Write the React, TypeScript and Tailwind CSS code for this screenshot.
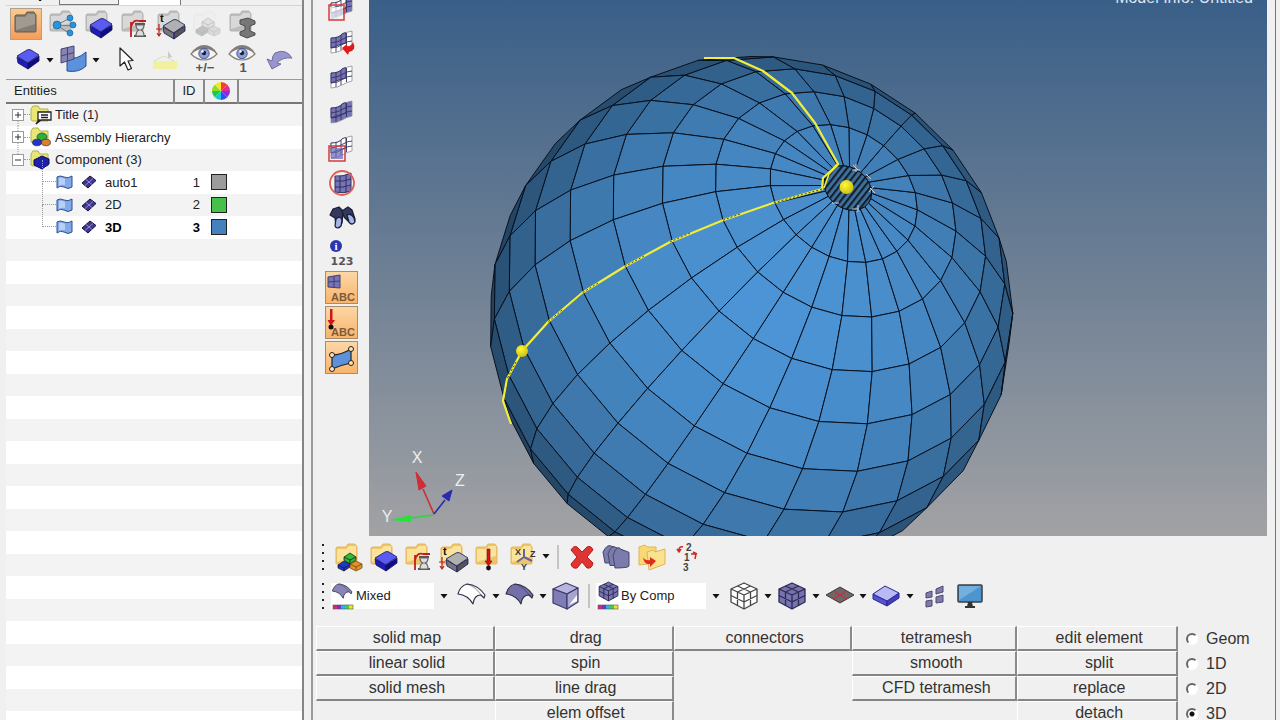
import React from "react";

type Kids = { children?: React.ReactNode };
type Pt = [number, number, number];

/* ---------- shared icon parts ---------- */

const Svg = ({ children, w = 32, h = 32 }: Kids & { w?: number; h?: number }) => (
  <svg width={w} height={h} viewBox={`0 0 ${w} ${h}`} fill="none" aria-hidden="true" className="block shrink-0">
    {children}
  </svg>
);

const FolderShape = ({ tone }: { tone: "gray" | "gold" | "faint" | "dark" }) => {
  const c = {
    gray: ["#dedede", "#bdbdbd", "#b4b4b4"],
    gold: ["#fdeba6", "#f0c468", "#e3b760"],
    faint: ["#efefef", "#e4e4e4", "#dcdcdc"],
    dark: ["#a8a199", "#837d76", "#5f5a55"],
  }[tone];
  return (
    <g strokeLinejoin="round">
      <path d="M4 7 L4 22 Q4 23 5 23 L24 23 Q25 23 25 22 L25 6 Q25 5 24 5 L23 3 L16 3 L14 6 L5 6 Z" fill={c[1]} stroke={c[2]} />
      <path d="M5 8 L14 8 L17 5 L24 5 L24 15 L5 21 Z" fill={c[0]} opacity="0.8" />
    </g>
  );
};

const Slab = ({ x = 8, y = 11, top = "#5a5af5", left = "#1d1dbb", right = "#0c0c86" }) => (
  <g transform={`translate(${x} ${y})`} stroke="#15155c" strokeWidth="0.8" strokeLinejoin="round">
    <path d="M0 7 L11 13 L11 19 L1 13 Z" fill={left} />
    <path d="M22 6 L11 13 L11 19 L22 11 Z" fill={right} />
    <path d="M0 6 L10 0 Q12 -1 14 0 L22 5 L12 12 Q11 13 9 12 Z" fill={top} />
  </g>
);

const Triad = ({ gold = false }) => (
  <g strokeWidth="0.7">
    <g stroke="#111" fill={gold ? "#2ebb3a" : "#bbb"}>
      <path d="M12 16 l6 -4 6 4 v3 l-6 4 -6 -4z" />
      <path d="M12 16 l6 3 6 -3 M18 19 v4" />
    </g>
    <g stroke="#111" fill="#2038cc">
      <path d="M6 24 l6 -4 6 3 v3 l-6 4 -6 -3z" />
      <path d="M6 24 l6 3 6 -3 M12 27 v3" />
    </g>
    <g stroke="#6b3a00" fill="#e2922a">
      <path d="M18 23 l6 -3 6 3 v4 l-6 3 -6 -3z" />
      <path d="M18 23 l6 3 6 -3 M24 26 v3" />
    </g>
  </g>
);

const Hourglass = () => (
  <g>
    <path d="M13 29 V14 M13 19 Q15 11 21 13 H28" stroke="#c11e1e" strokeWidth="1.8" />
    <path d="M17 16 H27 M16 28 H28" stroke="#555" strokeWidth="1.8" />
    <path d="M18 17 Q18 21 21 22 Q18 23 18 28 H26 Q26 23 23 22 Q26 21 26 17 Z" stroke="#666" strokeWidth="1.2" fill="#ddd" />
  </g>
);

const SizeT = () => (
  <g>
    <text x="6" y="14" fontSize="11" fontWeight="700" fill="#111" fontFamily="Liberation Sans, sans-serif">t</text>
    <path d="M5 16 V28 M2 21 H8 M3 25 L5 28 L7 25" stroke="#bb2020" strokeWidth="1.2" />
    <Slab x={9} y={12} top="#b0b0b0" left="#777" right="#555" />
  </g>
);

const RedPin = () => (
  <g>
    <path d="M15 8 H18 V20 H20 L16.5 25 L13 20 H15 Z" fill="#d01818" stroke="#7d0c0c" strokeWidth="0.6" />
    <circle cx="16.5" cy="27" r="2.4" fill="#111" />
  </g>
);

const Caret = () => (
  <svg width="8" height="5" viewBox="0 0 8 5" aria-hidden="true" className="block shrink-0">
    <path d="M0.500 0 H7.500 L4 4.500 Z" fill="#111" />
  </svg>
);

const CurveSheet = ({ fill }: { fill: string }) => (
  <g stroke="#2d2d42" strokeWidth="1.1" strokeLinejoin="round">
    <path d="M2 14 Q4 6 11 4 Q22 5 29 15 L28 18 L25 15 Q18 15 17 24 Q12 15 2 14 Z" fill={fill} />
    <path d="M11 4 Q20 7 25 15" opacity="0.4" />
  </g>
);

const CubeMesh = ({ fill, dark }: { fill: string; dark: string }) => (
  <g stroke={dark} strokeWidth="1.3" strokeLinejoin="round">
    <path d="M16 3 L29 9 V22 L16 29 L3 22 V9 Z" fill={fill} />
    <path d="M3 9 L16 15 L29 9 M16 15 V29 M9.5 6 L22.5 12 V26 M22.5 6 L9.5 12 V26 M3 15.500 L16 22 L29 15.500" />
  </g>
);

const Patch = ({ a, b, tail }: { a: string; b: string; tail?: React.ReactNode }) => (
  <Svg>
    <path d="M6 11 Q14 11 17 7 Q22 5 27 4 V19 Q22 20 17 23 Q12 26 6 26 Z" fill={b} stroke="#8e8e99" strokeWidth="0.8" />
    <path d="M6 11 Q14 11 17 7 Q20 5 21 6 V16 Q13 18 6 21 Z" fill={a} stroke="#30305a" strokeWidth="0.9" />
    <path d="M6 16 Q14 15 18 12 Q23 9 27 9 M6 21 Q13 21 18 17 Q23 14 27 14 M11 10 V25 M16 8 V23 M21.500 6 V20" stroke="#33335c" strokeWidth="0.9" />
    {tail}
  </Svg>
);

const Eye = ({ label }: { label: string }) => (
  <Svg>
    <path d="M3 10 Q9 4 16 4 Q24 4 29 10 Q23 16 16 16 Q9 16 3 10 Z" fill="#f6f6f6" stroke="#8b7d76" strokeWidth="1.2" />
    <path d="M3 9 Q9 1 16 1 Q24 1 29 9 Q23 5 16 4.500 Q9 5 3 9" fill="#857c78" />
    <circle cx="16" cy="9.500" r="5.200" fill="#8ba0d4" stroke="#4b5c91" />
    <circle cx="16" cy="9" r="2.200" fill="#1b1f3b" />
    <circle cx="14.500" cy="7.500" r="1.200" fill="#fff" />
    <text x="17" y="28" textAnchor="middle" fontSize="13" fontWeight="700" fill="#555" fontFamily="Liberation Sans, sans-serif">{label}</text>
  </Svg>
);

const ToolButton = ({ label, children, className = "" }: Kids & { label: string; className?: string }) => (
  <button type="button" aria-label={label} className={`flex shrink-0 items-center justify-center ${className}`}>
    {children}
  </button>
);

/* ---------- meshed sphere ---------- */

const CX = 751;
const CY = 317;
const R = 262;
const TILT = (38.2 * Math.PI) / 180;
const CAP = 5.6;
const STEP = 12.06;
const SECTORS = 25;
const WEDGE = 360 / SECTORS;
const START = 4.8;

const point = (polar: number, azimuth: number): Pt => {
  const a = (polar * Math.PI) / 180;
  const p = (azimuth * Math.PI) / 180;
  const u = -Math.cos(a) * Math.sin(TILT) + Math.sin(a) * Math.cos(p) * Math.cos(TILT);
  const v = Math.sin(a) * Math.sin(p);
  const z = Math.cos(a) * Math.cos(TILT) + Math.sin(a) * Math.cos(p) * Math.sin(TILT);
  return [-0.6 * u + 0.8 * v, 0.8 * u + 0.6 * v, z];
};

const shade = (x: number, y: number, z: number) => {
  const light = Math.max(0, 0.08 * x - 0.02 * y + 0.995 * z);
  const k = 0.45 + 0.57 * Math.pow(light, 0.85);
  return `rgb(${Math.round(75 * k)},${Math.round(146 * k)},${Math.round(210 * k)})`;
};

const facets: { d: string; fill: string }[] = [];
for (let ring = 0; ring < 14; ring++) {
  for (let m = 0; m < SECTORS; m++) {
    const a0 = CAP + ring * STEP;
    const p0 = START + m * WEDGE;
    const q = [point(a0, p0), point(a0 + STEP, p0), point(a0 + STEP, p0 + WEDGE), point(a0, p0 + WEDGE)];
    const area = q.reduce((s, c, i) => {
      const n = q[(i + 1) % 4];
      return s + c[0] * n[1] - n[0] * c[1];
    }, 0);
    if (area < 0) {
      const mid = [0, 1, 2].map((k) => q.reduce((s, c) => s + c[k], 0) / 4);
      facets.push({
        d: q.map((c) => `${(CX + c[0] * R).toFixed(1)},${(CY + c[1] * R).toFixed(1)}`).join(" "),
        fill: shade(mid[0], mid[1], mid[2]),
      });
    }
  }
}
const capPoints = Array.from({ length: SECTORS }, (_, m) => point(CAP, START + m * WEDGE))
  .map((c) => `${(CX + c[0] * R).toFixed(1)},${(CY + c[1] * R).toFixed(1)}`)
  .join(" ");

const guide =
  "M704 58 L734 58 L763 71 L792 93 L815 123 L838 164 L823 178 L822 189 L773 203 L721 221 L670 242 L624 267 L582 293 L548 322 L522 351 L507 379 L503 401 L511 424";

const Model = () => (
  <svg viewBox="369 0 898 536" preserveAspectRatio="xMidYMid slice" className="block h-full w-full" role="img" aria-label="Meshed sphere">
    <defs>
      <pattern id="hatch" width="5" height="5" patternUnits="userSpaceOnUse" patternTransform="rotate(38)">
        <rect width="5" height="5" fill="#41719d" />
        <rect width="2.200" height="5" fill="#12202f" />
      </pattern>
      <radialGradient id="bead" cx="0.4" cy="0.35" r="0.7">
        <stop offset="0" stopColor="#fdf93a" />
        <stop offset="1" stopColor="#c9bd10" />
      </radialGradient>
    </defs>
    <g stroke="#07101e" strokeWidth="1" strokeLinejoin="round">
      {facets.map((f) => (
        <polygon key={f.d} points={f.d} fill={f.fill} />
      ))}
      <polygon points={capPoints} fill="url(#hatch)" />
    </g>
    <path d="M853 165 l5 5 M856 164 v8 M852 170 h8 M866 174 l5 5 M870 188 l5 5 M874 186 l-5 6 M832 203 h7 M852 209 h7 M858 205 v7" stroke="#c9ced4" strokeWidth="1" fill="none" />
    <path d={guide} stroke="#f2ee3a" strokeWidth="2.200" fill="none" strokeLinejoin="round" />
    <path d="M822 189 L773 203 M740 214 L721 221 M690 233 L670 242 M644 256 L624 267 M598 283 L582 293 M562 310 L548 322 M516 362 L507 379" stroke="#4a4a10" strokeWidth="1" strokeDasharray="2 2" fill="none" />
    <path d="M838 165 L829 174 L824 188" stroke="#f2ee3a" strokeWidth="1.500" fill="none" />
    <circle cx="846.500" cy="187" r="7" fill="url(#bead)" />
    <circle cx="522" cy="351" r="6" fill="url(#bead)" />
  </svg>
);

const AxisTriad = () => (
  <svg width="120" height="90" viewBox="370 446 120 90" fill="none" aria-hidden="true" className="absolute bottom-0 left-0">
    <path d="M435 514 L424 489" stroke="#d02d35" strokeWidth="1.600" />
    <path d="M417 472 L427 486 L420 490 Z" fill="#d02d35" stroke="#d02d35" />
    <path d="M435 514 L446 500" stroke="#2b2bb0" strokeWidth="1.600" />
    <path d="M453 490 L450 501 L443 496 Z" fill="#2b2bb0" stroke="#2b2bb0" />
    <path d="M435 515 L411 518" stroke="#27d83a" strokeWidth="1.600" />
    <path d="M391 520 L412 515 L412 522 Z" fill="#27e03a" />
    <g fill="#eceef0" fontSize="16" textAnchor="middle" fontFamily="Liberation Sans, sans-serif">
      <text x="418" y="463">X</text>
      <text x="461" y="486">Z</text>
      <text x="388" y="522">Y</text>
    </g>
  </svg>
);

/* ---------- model browser ---------- */

const Expander = ({ open = false, first = false }) => (
  <svg width="12" height="22" viewBox="0 0 12 22" fill="none" aria-hidden="true" className="block shrink-0">
    {!first && <path d="M6 0 V5" stroke="#999" strokeDasharray="1 1" />}
    {!open && <path d="M6 17 V22" stroke="#999" strokeDasharray="1 1" />}
    <rect x="0.500" y="5.500" width="11" height="11" fill="#fff" stroke="#9a9a9a" />
    <path d={open ? "M3 11 H9" : "M3 11 H9 M6 8 V14"} stroke="#333" />
  </svg>
);

const TreeFolder = ({ children }: Kids) => (
  <svg width="22" height="20" viewBox="0 0 22 20" fill="none" aria-hidden="true" className="block shrink-0">
    <path d="M1 4 L3 1 H8 L10 4 H18 V16 H3 L1 15 Z" fill="#e9e678" stroke="#b5b04c" />
    {children}
  </svg>
);

const SurfaceIcon = () => (
  <svg width="17" height="16" viewBox="0 0 17 16" fill="none" aria-hidden="true" className="block shrink-0">
    <path d="M1 3 Q4 1 8 3 Q12 5 16 2 V13 Q12 16 8 13 Q4 11 1 14 Z" fill="#83aae8" stroke="#2f4f8f" />
    <path d="M3 4 Q6 3 9 5 V11 Q6 10 3 12 Z" fill="#b8d0f7" />
  </svg>
);

const ElementIcon = () => (
  <svg width="16" height="14" viewBox="0 0 16 14" fill="none" aria-hidden="true" className="block shrink-0">
    <path d="M9 1 L15 5.500 L7 13 L1 8 Z" fill="#3d3690" stroke="#15123f" />
    <path d="M5 4.500 L11 9.500 M12 3.500 L4 10.500" stroke="#aaa5dd" strokeWidth="0.8" />
  </svg>
);

const groups = [
  {
    name: "Title (1)",
    open: false,
    art: <path d="M8 7 H21 V15 H11 L6 19 L9 15 H8 Z M11 10 H18 M11 12.500 H18" fill="#fff" stroke="#222" strokeWidth="1.300" />,
  },
  {
    name: "Assembly Hierarchy",
    open: false,
    art: (
      <g strokeWidth="0.600" stroke="#123">
        <ellipse cx="12" cy="10" rx="5" ry="4" fill="#2fae3a" />
        <ellipse cx="7" cy="15.500" rx="4.500" ry="3.300" fill="#2635c8" />
        <ellipse cx="16" cy="15.500" rx="4.500" ry="3.300" fill="#d9822b" />
      </g>
    ),
  },
  {
    name: "Component (3)",
    open: true,
    art: <path d="M4 10 L12 6 L19 9 L19 14 L12 19 L4 15 Z" fill="#1f1fae" stroke="#0b0b55" strokeLinejoin="round" />,
  },
];

const components = [
  { name: "auto1", id: 1, swatch: "bg-[#9c9c9c]", bold: false },
  { name: "2D", id: 2, swatch: "bg-[#45c04b]", bold: false },
  { name: "3D", id: 3, swatch: "bg-[#4780bf]", bold: true },
];

const rowClass = "h-[22px] odd:bg-[#f3f3f3] even:h-[23px] even:bg-white";

const Browser = () => (
  <table className="w-full table-fixed border-collapse text-[13px] leading-none text-[#222]">
    <colgroup>
      <col className="w-[168px]" />
      <col className="w-[30px]" />
      <col className="w-[34px]" />
      <col />
    </colgroup>
    <thead>
      <tr className="h-[23px] border-t border-b-2 border-t-[#999] border-b-[#777] bg-[#f0f0f0]">
        <th className="border-r-2 border-[#8a8a8a] pl-2 text-left font-normal">Entities</th>
        <th className="border-r-2 border-[#8a8a8a] text-center font-normal">ID</th>
        <th className="border-r-2 border-[#8a8a8a] p-0" aria-label="Color">
          <svg width="18" height="18" viewBox="-9 -9 18 18" className="mx-auto block" aria-hidden="true">
            {["#f8e71c", "#8be01f", "#22c54a", "#1cc6d8", "#2b4ff0", "#8b2be0", "#e02b9a", "#f0402b"].map((c, i) => {
              const a = ((5 - i) * Math.PI) / 4;
              const b = a + Math.PI / 4;
              return <path key={c} fill={c} d={`M0 0 L${9 * Math.cos(a)} ${9 * Math.sin(a)} A9 9 0 0 1 ${9 * Math.cos(b)} ${9 * Math.sin(b)} Z`} />;
            })}
          </svg>
        </th>
        <th aria-label="Empty" />
      </tr>
    </thead>
    <tbody>
      {groups.map((g, i) => (
        <tr key={g.name} className={rowClass}>
          <td className="p-0">
            <div className="flex items-center pl-1.5">
              <Expander open={g.open} first={i === 0} />
              <span className="w-1.5 shrink-0 border-t border-dotted border-[#999]" />
              <TreeFolder>{g.art}</TreeFolder>
              <span className="pl-[3px] whitespace-nowrap">{g.name}</span>
            </div>
          </td>
          <td />
          <td />
          <td />
        </tr>
      ))}
      {components.map((c) => (
        <tr key={c.name} className={`${rowClass} ${c.bold ? "font-bold text-black" : ""}`}>
          <td className="p-0">
            <div className="flex items-center pl-9">
              <span className="-mt-[22px] h-[22px] w-3.5 border-b border-l border-dotted border-[#999]" />
              <SurfaceIcon />
              <span className="w-2" />
              <ElementIcon />
              <span className="pl-2">{c.name}</span>
            </div>
          </td>
          <td className="p-0 pr-1 text-right">{c.id}</td>
          <td className="p-0">
            <span className={`ml-[7px] block size-4 border border-[#222] ${c.swatch}`} />
          </td>
          <td />
        </tr>
      ))}
      {Array.from({ length: 24 }, (_, i) => (
        <tr key={i} className={rowClass}>
          <td colSpan={4} />
        </tr>
      ))}
    </tbody>
  </table>
);

const LeftPanel = () => (
  <aside className="flex w-[304px] shrink-0 flex-col overflow-hidden border-r-2 border-[#858585] pl-1.5">
    <div className="flex h-[5px] shrink-0 items-end text-sm leading-4">
      <button type="button" className="w-[54px] border-r border-[#777] pr-2 pb-1">Utility</button>
      <button type="button" className="w-[59px] border-r border-b border-[#777] pb-[3px]">Mask</button>
      <button type="button" className="w-[62px] border-r border-[#777] bg-white pb-1">Model</button>
    </div>
    <div className="flex h-9 shrink-0 items-center gap-1 border-t border-[#d5d5d5] pl-1">
      <ToolButton label="Folders" className="size-8 border border-[#b0a08c] bg-linear-to-b from-[#fbc98e] to-[#f79d58]">
        <Svg w={30} h={30}><FolderShape tone="dark" /></Svg>
      </ToolButton>
      <ToolButton label="Assemblies">
        <Svg>
          <FolderShape tone="gray" />
          <path d="M11 17 L24 10 M11 17 L27 18 M11 17 L24 26" stroke="#777" />
          <g fill="#2b93d8" stroke="#14588f" strokeWidth="0.600">
            <circle cx="11" cy="17" r="4" /><circle cx="24" cy="10" r="3" /><circle cx="27" cy="17" r="3" /><circle cx="24" cy="25" r="3" />
          </g>
        </Svg>
      </ToolButton>
      <ToolButton label="Components"><Svg><FolderShape tone="gray" /><Slab /></Svg></ToolButton>
      <ToolButton label="Load collectors"><Svg><FolderShape tone="gray" /><Hourglass /></Svg></ToolButton>
      <ToolButton label="Properties"><Svg><FolderShape tone="gray" /><SizeT /></Svg></ToolButton>
      <ToolButton label="Materials"><Svg><g opacity="0.25"><FolderShape tone="faint" /><g transform="translate(0 -2)" filter="grayscale(1)"><Triad /></g></g></Svg></ToolButton>
      <ToolButton label="Sections">
        <Svg>
          <FolderShape tone="gray" />
          <path d="M14 12 L22 10 L29 13 V16 L24 18 V23 L29 25 V27 L21 30 L14 27 V24 L19 22 V18 L14 16 Z" fill="#777" stroke="#4c4c4c" strokeLinejoin="round" />
        </Svg>
      </ToolButton>
    </div>
    <div className="flex h-[38px] shrink-0 items-center pl-1.5">
      <ToolButton label="Component view"><Svg><Slab x={5} y={6} /></Svg></ToolButton>
      <ToolButton label="Component view options" className="w-3"><Caret /></ToolButton>
      <ToolButton label="Element and geometry">
        <Svg>
          <path d="M11 13 Q20 17 30 8 V22 Q23 29 11 27 Z" fill="#5c92dd" stroke="#274d8b" />
          <path d="M5 5 L18 2 V15 L5 19 Z" fill="#8684b5" stroke="#46446f" />
          <path d="M5 12 L18 8.500 M11.500 4 V17" stroke="#46446f" />
        </Svg>
      </ToolButton>
      <ToolButton label="Element options" className="w-4"><Caret /></ToolButton>
      <ToolButton label="Select" className="ml-2">
        <Svg><path d="M8 4 L8 22 L12.500 18 L16 26 L19.500 24.500 L16 17 L21 16.500 Z" fill="#fff" stroke="#222" strokeWidth="1.200" strokeLinejoin="round" /></Svg>
      </ToolButton>
      <ToolButton label="Highlight" className="ml-1.5">
        <Svg><path d="M3 17 H27 V25 H3 Z" fill="#f4f0a2" /><path d="M4 17 L14 12 L24 17" stroke="#d5e0b5" /><path d="M18 7 L22 13 L18 14 Z" fill="#c8c8c8" /></Svg>
      </ToolButton>
      <ToolButton label="Show or hide" className="ml-1.5"><Eye label="+/−" /></ToolButton>
      <ToolButton label="Isolate" className="ml-1.5"><Eye label="1" /></ToolButton>
      <ToolButton label="Undo" className="ml-1.5">
        <Svg><path d="M3 15 L8 25 L17 20 L13 19 Q18 13 28 14 Q22 4 11 9 Q8 12 8 17 Z" fill="#9896cc" stroke="#6e6ca4" /></Svg>
      </ToolButton>
    </div>
    <div className="min-h-0 flex-1 overflow-hidden bg-white">
      <Browser />
    </div>
  </aside>
);

/* ---------- vertical display bar ---------- */

const FILL = "#7773b8";
const sideTools = [
  { label: "Mask elements", on: false, art: <Patch a="#fff" b={FILL} tail={<g><rect x="5" y="15" width="13" height="11" fill="#fff" opacity="0.700" /><rect x="4" y="13" width="15" height="15" stroke="#d33c3c" strokeWidth="1.500" /></g>} /> },
  { label: "Reverse mask", on: false, art: <Patch a={FILL} b="#fff" tail={<path d="M17 21 L22 17 L22 19 Q26 20 28 15 Q32 23 24 25 L23 28 Z" fill="#e01b1b" />} /> },
  { label: "Unmask adjacent", on: false, art: <Patch a={FILL} b="#fff" /> },
  { label: "Unmask all", on: false, art: <Patch a={FILL} b={FILL} /> },
  { label: "Unmask shown", on: false, art: <Patch a="#fff" b="#fff" tail={<g><rect x="6" y="16" width="12" height="11" fill="#6866b4" opacity="0.7" /><rect x="4" y="14" width="16" height="15" stroke="#d33c3c" strokeWidth="1.500" /></g>} /> },
  {
    label: "Spherical clipping",
    on: false,
    art: (
      <Svg>
        <path d="M10 9 Q18 10 26 6 V24 Q18 27 10 25 Z" fill={FILL} stroke="#30305a" />
        <path d="M10 14 Q18 15 26 12 M10 20 Q18 21 26 18 M15 9 V26 M21 8 V26" stroke="#30305a" />
        <circle cx="17" cy="16" r="12" stroke="#df5b5b" strokeWidth="1.800" />
      </Svg>
    ),
  },
  {
    label: "Find",
    on: false,
    art: (
      <Svg>
        <g stroke="#171b33" strokeWidth="1.200" strokeLinejoin="round">
          <path d="M5 13 L8 7 L14 5 L18 9 L17 21 Q15 26 11 25 L10 16 Z" fill="#33395e" />
          <path d="M17 9 L23 5 L27 8 L30 17 Q30 22 26 22 L19 15 Z" fill="#33395e" />
          <path d="M11 17 Q15 13 17 18 L16 24 Q12 28 10 24 Z" fill="#a6b4e6" />
          <path d="M22 13 Q26 11 29 16 L30 20 Q27 24 24 20 Z" fill="#a6b4e6" />
        </g>
      </Svg>
    ),
  },
  {
    label: "Numbers",
    on: false,
    art: (
      <Svg>
        <circle cx="11" cy="9" r="6" fill="#2936b0" />
        <text x="11" y="13" textAnchor="middle" fontSize="11" fontWeight="700" fill="#fff" fontFamily="Liberation Serif, serif">i</text>
        <text x="17" y="28" textAnchor="middle" fontSize="11" fontWeight="700" fill="#555" fontFamily="DejaVu Sans, sans-serif">123</text>
      </Svg>
    ),
  },
  {
    label: "Element labels",
    on: true,
    art: (
      <Svg>
        <path d="M3 5 L15 3 V16 L3 15 Z" fill="#7773b8" stroke="#40406f" />
        <path d="M3 10 L15 9 M9 4 V15" stroke="#40406f" />
        <text x="18" y="29" textAnchor="middle" fontSize="11" fontWeight="700" fill="#7c5a3c" fontFamily="Liberation Sans, sans-serif">ABC</text>
      </Svg>
    ),
  },
  {
    label: "Load labels",
    on: true,
    art: (
      <Svg>
        <path d="M5 2 H7.500 V13 H10 L6 19 L2.500 13 H5 Z" fill="#d01818" />
        <circle cx="6" cy="20" r="2.500" fill="#111" />
        <text x="18" y="29" textAnchor="middle" fontSize="11" fontWeight="700" fill="#7c5a3c" fontFamily="Liberation Sans, sans-serif">ABC</text>
      </Svg>
    ),
  },
  {
    label: "Handles",
    on: true,
    art: (
      <Svg>
        <path d="M7 13 Q16 13 26 7 V21 Q16 23 7 27 Z" fill="#5c92dd" stroke="#222" strokeWidth="1.200" />
        <g fill="#fbe2b8" stroke="#222"><circle cx="7" cy="13" r="2.500" /><circle cx="26" cy="7" r="2.500" /><circle cx="26" cy="21" r="2.500" /><circle cx="7" cy="27" r="2.500" /></g>
      </Svg>
    ),
  },
];

const SideBar = () => (
  <nav aria-label="Display" className="flex w-14 shrink-0 flex-col items-center overflow-hidden">
    <div className="-mt-[9px] flex flex-col gap-0.5">
      {sideTools.map((t) => (
        <ToolButton
          key={t.label}
          label={t.label}
          className={`size-[33px] ${t.on ? "border border-[#a98d68] bg-linear-to-b from-[#fcd6a6] to-[#f9b469]" : ""}`}
        >
          {t.art}
        </ToolButton>
      ))}
    </div>
  </nav>
);

/* ---------- horizontal toolbars ---------- */

const Grip = () => (
  <span className="flex w-3 shrink-0 flex-col items-center gap-1.5">
    {[0, 1, 2, 3].map((i) => (
      <span key={i} className="size-0.5 bg-[#222]" />
    ))}
  </span>
);

const RainbowBar = ({ y = 26 }) => (
  <g>
    {["#d42b6a", "#7a2be0", "#2bb6e0", "#3bd04a", "#f0e02b"].map((c, i) => (
      <rect key={c} x={2 + i * 4} y={y} width="4" height="4" fill={c} />
    ))}
    <rect x="2" y={y} width="20" height="4" stroke="#555" strokeWidth="0.600" />
  </g>
);

const Combo = ({ id, label, value, width, icon }: { id: string; label: string; value: string; width: string; icon: React.ReactNode }) => (
  <div className={`flex h-[26px] shrink-0 items-center bg-white ${width}`}>
    {icon}
    <label htmlFor={id} className="sr-only">{label}</label>
    <select id={id} className="min-w-0 flex-1 appearance-none bg-transparent pl-px text-[13px] leading-4 text-[#222] outline-none">
      <option>{value}</option>
    </select>
    <span className="pointer-events-none flex h-full w-5 items-center justify-center bg-[#f0f0f0]"><Caret /></span>
  </div>
);

const Toolbars = () => (
  <>
    <div className="flex h-[41px] shrink-0 items-center gap-[3px] pl-1">
      <Grip />
      <ToolButton label="Assembly"><Svg><FolderShape tone="gold" /><Triad gold /></Svg></ToolButton>
      <ToolButton label="Component"><Svg><FolderShape tone="gold" /><Slab /></Svg></ToolButton>
      <ToolButton label="Load step"><Svg><FolderShape tone="gold" /><Hourglass /></Svg></ToolButton>
      <ToolButton label="Property"><Svg><FolderShape tone="gold" /><SizeT /></Svg></ToolButton>
      <ToolButton label="Load collector"><Svg><FolderShape tone="gold" /><RedPin /></Svg></ToolButton>
      <ToolButton label="System collector">
        <Svg>
          <FolderShape tone="gold" />
          <path d="M17 16 V8 M17 16 L10 21 M17 16 L25 20" stroke="#65639c" strokeWidth="2" />
          <g fontSize="9" fontWeight="700" fill="#333" fontFamily="Liberation Sans, sans-serif"><text x="8" y="14">X</text><text x="23" y="16">Z</text><text x="14" y="29">Y</text></g>
        </Svg>
      </ToolButton>
      <ToolButton label="Collector options" className="w-2"><Caret /></ToolButton>
      <span className="mx-1 h-6 w-0.5 shrink-0 bg-[#c4c4c4]" />
      <ToolButton label="Delete">
        <Svg><path d="M5 9 Q8 4 11 6 L16 11 L21 6 Q25 4 27 9 L21 16 L27 22 Q26 28 21 27 L16 21 L11 27 Q6 28 5 23 L11 16 Z" fill="#df3434" stroke="#b51b1b" /></Svg>
      </ToolButton>
      <ToolButton label="Organize">
        <Svg>
          {[0, 5, 10].map((o) => (
            <path key={o} d={`M${3 + o} ${11 + o / 3} Q${7 + o} 3 ${11 + o} ${5 + o / 3} L${19 + o} ${8 + o / 3} V${20 + o / 2} Q${18 + o} ${22 + o / 2} ${5 + o} ${22 + o / 2} Z`} fill="#7c7cac" stroke="#46466c" strokeLinejoin="round" transform="translate(-1 0)" />
          ))}
        </Svg>
      </ToolButton>
      <ToolButton label="Move entities">
        <Svg>
          <path d="M3 6 L9 4 L11 6 H20 V22 L3 24 Z" fill="#f9d876" stroke="#dfb456" />
          <path d="M11 11 L17 9 L19 11 L29 8 V23 L13 29 Z" fill="#fbe28c" stroke="#dfb456" />
          <path d="M7 16 Q9 20 14 19 V16 L20 20 L14 26 V23 Q8 24 7 16 Z" fill="#e02a1a" />
        </Svg>
      </ToolButton>
      <ToolButton label="Renumber">
        <Svg>
          <g fontSize="10" fontWeight="700" fill="#444" fontFamily="Liberation Sans, sans-serif"><text x="15" y="10">2</text><text x="13" y="20">1</text><text x="12" y="30">3</text></g>
          <path d="M12 6 Q8 5 8 9 M6 8 L8 11 L10 8 M20 13 H25 L24 18 M22 11 L26 13" stroke="#cf2626" strokeWidth="1.500" />
        </Svg>
      </ToolButton>
    </div>
    <div className="flex h-[38px] shrink-0 items-center pl-1">
      <Grip />
      <span className="w-0.5" />
      <Combo id="shading" label="Element colour" value="Mixed" width="w-[123px]" icon={
        <Svg w={24} h={30}><g transform="scale(0.72)"><CurveSheet fill="#8886b8" /></g><RainbowBar y={24} /></Svg>
      } />
      <ToolButton label="Wireframe geometry" className="ml-0.5"><Svg><CurveSheet fill="#fdfdfd" /></Svg></ToolButton>
      <ToolButton label="Wireframe options" className="w-4"><Caret /></ToolButton>
      <ToolButton label="Shaded geometry"><Svg><CurveSheet fill="#7270a8" /></Svg></ToolButton>
      <ToolButton label="Shaded options" className="w-3.5"><Caret /></ToolButton>
      <ToolButton label="Transparency">
        <Svg>
          <g stroke="#3d3b68" strokeWidth="1.200" strokeLinejoin="round">
            <path d="M3 9 L16 3 L28 8 L17 14 Z" fill="#b7b5e0" /><path d="M3 9 L17 14 V29 L3 23 Z" fill="#7f7db5" /><path d="M28 8 L17 14 V29 L28 22 Z" fill="#a6a4d0" />
            <path d="M19 25 L27 15 V21 Z" fill="#fff" stroke="none" />
          </g>
        </Svg>
      </ToolButton>
      <span className="mx-1.5 h-6 w-0.5 shrink-0 bg-[#c4c4c4]" />
      <Combo id="coloring" label="Colour mode" value="By Comp" width="w-[130px]" icon={
        <Svg w={24} h={30}><g transform="translate(1 -1) scale(0.72)"><CubeMesh fill="#7674b0" dark="#2c2a50" /></g><RainbowBar y={24} /></Svg>
      } />
      <ToolButton label="Wireframe elements" className="ml-0.5"><Svg><CubeMesh fill="#fff" dark="#444" /></Svg></ToolButton>
      <ToolButton label="Wireframe element options" className="w-4"><Caret /></ToolButton>
      <ToolButton label="Shaded elements"><Svg><CubeMesh fill="#7674b0" dark="#2c2a50" /></Svg></ToolButton>
      <ToolButton label="Shaded element options" className="w-4"><Caret /></ToolButton>
      <ToolButton label="Shrink elements">
        <Svg><path d="M16 7 L30 15 L16 23 L2 15 Z" fill="#6c6868" stroke="#3d3a3a" /><path d="M9 11 L23 19" stroke="#c62f43" strokeWidth="1.400" /><path d="M23 11 L9 19" stroke="#c62f43" strokeWidth="1.400" /></Svg>
      </ToolButton>
      <ToolButton label="Shrink options" className="w-3.5"><Caret /></ToolButton>
      <ToolButton label="Thickness"><Svg><g stroke="#29278c" strokeLinejoin="round" transform="translate(0 -1)"><path d="M3 15 L17 22 V27 L3 20 Z" fill="#5552d8" /><path d="M29 14 L17 22 V27 L29 19 Z" fill="#3f3cc0" /><path d="M3 15 L15 7 L29 14 L17 22 Z" fill="#b9baf5" /></g></Svg></ToolButton>
      <ToolButton label="Thickness options" className="w-4"><Caret /></ToolButton>
      <ToolButton label="Exploded view">
        <Svg>
          <g fill="#7e7ca8" stroke="#4b4972">
            <path d="M8 13 L14 11 V17 L8 18 Z" /><path d="M18 9 L25 6 V12 L18 14 Z" /><path d="M8 21 L14 20 V26 L8 27 Z" /><path d="M18 17 L25 15 V22 L18 23 Z" />
          </g>
        </Svg>
      </ToolButton>
      <ToolButton label="Visualization options" className="ml-1">
        <Svg>
          <rect x="4" y="5" width="24" height="17" rx="1" fill="#4e95cf" stroke="#3a3f46" strokeWidth="1.500" />
          <path d="M5 6 H27 L5 20 Z" fill="#83bae6" opacity="0.700" />
          <path d="M14 22 H18 L19 27 H13 Z" fill="#333" /><path d="M11 27 H21" stroke="#333" strokeWidth="2" />
        </Svg>
      </ToolButton>
    </div>
  </>
);

/* ---------- command panel ---------- */

const commands = [
  ["solid map", "drag", "connectors", "tetramesh", "edit element"],
  ["linear solid", "spin", "", "smooth", "split"],
  ["solid mesh", "line drag", "", "CFD tetramesh", "replace"],
  ["", "elem offset", "", "", "detach"],
];
const pages = ["Geom", "1D", "2D", "3D"];

const CommandPanel = () => (
  <div className="grid h-[94px] shrink-0 auto-rows-[25px] grid-cols-[179fr_179fr_179fr_165fr_161fr_97fr] overflow-hidden pl-[3px] text-base leading-none text-[#333]">
    {commands.map((row, r) => (
      <React.Fragment key={pages[r]}>
        {row.map((name, c) =>
          name ? (
            <button key={c} type="button" className="border-t border-r-2 border-b-2 border-l border-t-white border-r-[#8a8a8a] border-b-[#858585] border-l-white bg-[#f0f0f0] pl-1">
              {name}
            </button>
          ) : (
            <span key={c} />
          ),
        )}
        <label className="flex items-center gap-2 pl-2">
          <input
            type="radio"
            name="page"
            value={pages[r]}
            defaultChecked={pages[r] === "3D"}
            className="size-3 appearance-none rounded-full border-2 border-t-[#666] border-r-white border-b-white border-l-[#666] bg-white checked:bg-[radial-gradient(circle,#111_0_2px,#fff_3px)]"
          />
          {pages[r]}
        </label>
      </React.Fragment>
    ))}
  </div>
);

export default function App() {
  return (
    <div className="flex h-screen overflow-hidden bg-[#f0f0f0] font-['Liberation_Sans',Arial,sans-serif]">
      <LeftPanel />
      <main className="ml-[7px] flex min-w-0 flex-1 flex-col border-l-2 border-[#9a9a9a]">
        <div className="mr-1 flex min-h-0 flex-1 flex-col border-r border-[#777]">
          <div className="flex min-h-0 flex-1">
            <SideBar />
            <section className="relative mr-2 min-w-0 flex-1 overflow-hidden bg-linear-to-b from-[#395f88] via-[#6d7f94] to-[#a2a2a4]">
              <Model />
              <AxisTriad />
              <p className="absolute -top-2.5 right-3.5 text-base leading-4 text-[#dfe6ee]">Model Info: Untitled</p>
            </section>
          </div>
          <Toolbars />
          <div className="h-[11px] shrink-0" />
          <CommandPanel />
        </div>
      </main>
    </div>
  );
}
